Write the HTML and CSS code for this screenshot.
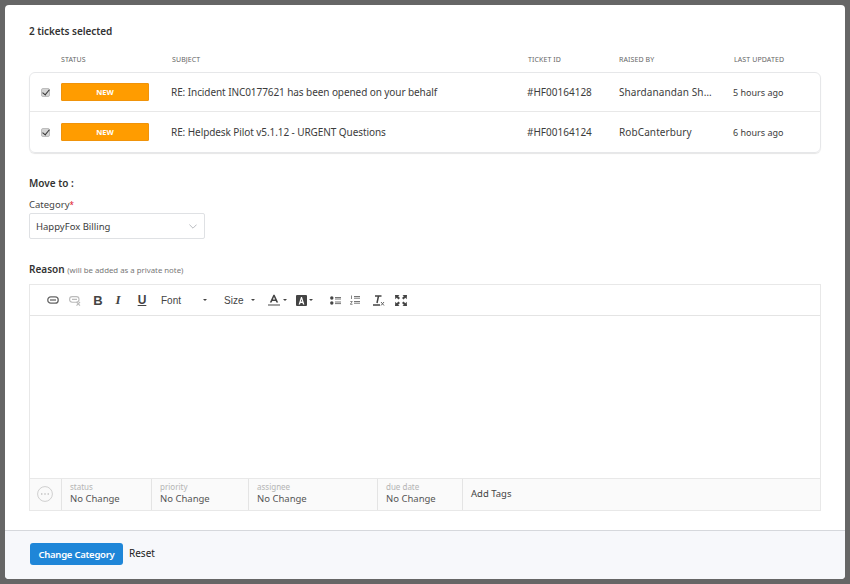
FILE: index.html
```html
<!DOCTYPE html>
<html lang="en">
<head>
<meta charset="utf-8">
<title>Move tickets</title>
<link rel="stylesheet" href="styles.css">
</head>
<body>
<div class="modal">
  <main class="content">
    <h1 class="selected">2 tickets selected</h1>
    <div class="grid heads">
      <span></span><span class="h-status">STATUS</span><span>SUBJECT</span><span>TICKET ID</span><span>RAISED BY</span><span>LAST UPDATED</span>
    </div>
    <div class="card">
      <div class="grid row">
        <input class="check" type="checkbox" checked>
        <span class="badge">NEW</span>
        <span class="subject">RE: Incident INC0177621 has been opened on your behalf</span>
        <span class="tid">#HF00164128</span>
        <span class="raised">Shardanandan Sh…</span>
        <span class="updated">5 hours ago</span>
      </div>
      <div class="grid row">
        <input class="check" type="checkbox" checked>
        <span class="badge">NEW</span>
        <span class="subject">RE: Helpdesk Pilot v5.1.12 - URGENT Questions</span>
        <span class="tid">#HF00164124</span>
        <span class="raised">RobCanterbury</span>
        <span class="updated">6 hours ago</span>
      </div>
    </div>
    <h2 class="move">Move to :</h2>
    <label class="cat-label">Category<span class="req">*</span></label>
    <div class="select">
      <span>HappyFox Billing</span>
      <svg class="chev" width="8" height="5" viewBox="0 0 8 5"><path d="M.4.6 4 4.200 7.600.6" fill="none" stroke="#b9bcc0" stroke-width="1"/></svg>
    </div>
    <div class="reason"><strong>Reason</strong> <small>(will be added as a private note)</small></div>
    <div class="editor">
      <div class="toolbar">
        <svg class="ic ic-link" width="12" height="8" viewBox="0 0 12 8"><rect x=".8" y=".8" width="10.400" height="6.400" rx="3" fill="none" stroke="#666" stroke-width="1.300"/><path d="M3 4h6" stroke="#666" stroke-width="1.300"/></svg>
        <svg class="ic ic-unlink" width="12" height="10" viewBox="0 0 12 10"><rect x=".6" y=".6" width="9.400" height="5.600" rx="2.600" fill="none" stroke="#bbb" stroke-width="1.100"/><path d="M3 3.400h5M7.500 6l3.500 3.600M11 6 7.500 9.600" stroke="#bbb" stroke-width="1.100"/></svg>
        <span class="tb tb-b">B</span>
        <span class="tb tb-i">I</span>
        <span class="tb tb-u">U</span>
        <span class="combo combo-font">Font</span><i class="caret caret-font"></i>
        <span class="combo combo-size">Size</span><i class="caret caret-size"></i>
        <svg class="ic ic-color" width="13" height="12" viewBox="0 0 13 12"><path d="M1.800 8.600 5.400.8h1.200l3.600 7.800H8.400L7.700 7H4.300l-.7 1.600ZM4.900 5.500h2.200L6 3Z" fill="#444"/><path d="M0 11h12" stroke="#666" stroke-width="1.200"/></svg><i class="caret caret-mini"></i>
        <svg class="ic ic-bg" width="11" height="11" viewBox="0 0 11 11"><rect width="11" height="11" rx="1" fill="#444"/><path d="M2.600 9.400 5 2h1l2.400 7.400H7L6.500 8h-2L4 9.400ZM4.800 6.600h1.400L5.500 4.200Z" fill="#fff"/></svg><i class="caret caret-mini"></i>
        <svg class="ic ic-ul" width="11" height="9" viewBox="0 0 11 9"><circle cx="1.800" cy="2" r="1.700" fill="#444"/><circle cx="1.800" cy="7" r="1.700" fill="#444"/><path d="M5 1.500h6M5 3h6M5 6h6M5 7.600h6" stroke="#666" stroke-width=".9"/></svg>
        <svg class="ic ic-ol" width="10" height="10" viewBox="0 0 10 10"><path d="M1.500.5v3.500M.3 6.500h2L.3 9.300h2.200" stroke="#666" stroke-width=".8" fill="none"/><path d="M4 1.500h6M4 3.200h6M4 6.500h6M4 8.200h6" stroke="#666" stroke-width=".9"/></svg>
        <svg class="ic ic-clear" width="12" height="11" viewBox="0 0 12 11"><path d="M2 1h6.500M5.500 1 4 8M0 10h7" stroke="#444" stroke-width="1.500" fill="none"/><path d="M8 7l3 3.500M11 7l-3 3.500" stroke="#666" stroke-width="1"/></svg>
        <svg class="ic ic-max" width="12" height="11" viewBox="0 0 12 11"><path d="M0 0h4.500L3.200 1.300l1.800 1.800-1.500 1.500-1.800-1.800L.3 4.200ZM12 0H7.500l1.300 1.300L7 3.100l1.500 1.500 1.800-1.800 1.400 1.400ZM0 11h4.500L3.200 9.700 5 7.900 3.500 6.400 1.700 8.200.3 6.800ZM12 11H7.500l1.300-1.300L7 7.900l1.500-1.500 1.800 1.800 1.400-1.400Z" fill="#444"/></svg>
      </div>
      <div class="edit-area"></div>
      <div class="props">
        <div class="cell cell-more">
          <svg width="16" height="16" viewBox="0 0 16 16"><circle cx="8" cy="8" r="7.400" fill="none" stroke="#c9c9c9" stroke-width=".9"/><circle cx="4.800" cy="8" r=".7" fill="#aaa"/><circle cx="8" cy="8" r=".7" fill="#aaa"/><circle cx="11.200" cy="8" r=".7" fill="#aaa"/></svg>
        </div>
        <div class="cell cell-status"><span class="k">status</span><span class="v">No Change</span></div>
        <div class="cell cell-priority"><span class="k">priority</span><span class="v">No Change</span></div>
        <div class="cell cell-assignee"><span class="k">assignee</span><span class="v">No Change</span></div>
        <div class="cell cell-due"><span class="k">due date</span><span class="v">No Change</span></div>
        <div class="cell cell-tags">Add Tags</div>
      </div>
    </div>
  </main>
  <footer class="footer">
    <button class="primary" type="button">Change Category</button>
    <a class="reset">Reset</a>
  </footer>
</div>
</body>
</html>
```
FILE: styles.css
```css
* { box-sizing: border-box; }
html, body { height: 100%; }
body {
  margin: 0;
  padding: 5px;
  background: #666;
  font-family: "Noto Sans", "Open Sans", sans-serif;
  color: #333;
  overflow: hidden;
}
.modal {
  height: 574px;
  width: 840px;
  background: #fff;
  border-radius: 4px;
  display: flex;
  flex-direction: column;
  overflow: hidden;
}
.content { flex: 1; padding: 0 24px; }
.selected {
  margin: 19px 0 0;
  font-size: 10px;
  line-height: 14px;
  font-weight: 600;
  letter-spacing: -.05px;
  color: #333;
}
.grid {
  display: grid;
  grid-template-columns: 31px 110px 356px 91px 115px 1fr;
  align-items: center;
}
.heads {
  height: 14px;
  margin-top: 15px;
  padding-left: 1px;
  font-size: 7px;
  line-height: 14px;
  color: #666;
  letter-spacing: .1px;
}
.heads span { padding-left: 1px; }
.heads .h-status { padding-left: 0; }
.card {
  margin-top: 5px;
  height: 81px;
  width: 792px;
  border: 1px solid #e6e7e9;
  border-radius: 6px;
  box-shadow: 0 1px 1px #e6e6e6;
}
.row { height: 38px; font-size: 10px; color: #3c3c3c; }
.row + .row { border-top: 1px solid #e8e8e8; height: 41px; }
.subject { letter-spacing: -.08px; }
.raised { padding-left: 1px; letter-spacing: .1px; white-space: nowrap; }
.updated { font-size: 9px; }
.check {
  appearance: none;
  position: relative;
  margin: 0 0 0 11px;
  width: 9px;
  height: 9px;
  background: #d4d4d4;
  border: 1px solid #bdbdbd;
  border-radius: 2px;
}
.check::after {
  content: "";
  position: absolute;
  left: 2px;
  top: -1px;
  width: 3px;
  height: 6px;
  border: solid #333;
  border-width: 0 1.500px 1.500px 0;
  transform: rotate(40deg);
}
.badge {
  width: 88px;
  height: 18px;
  background: #ff9c00;
  border: 1px solid #f0930a;
  border-radius: 1px;
  color: #fff;
  font-size: 7.500px;
  font-weight: 700;
  line-height: 16px;
  text-align: center;
}
.move {
  margin: 23px 0 0;
  font-size: 10px;
  line-height: 14px;
  font-weight: 600;
  color: #333;
}
.cat-label {
  display: block;
  margin-top: 8px;
  font-size: 9.500px;
  line-height: 14px;
  color: #444;
}
.req { color: #e0132a; font-size: 8px; }
.select {
  margin-top: 1px;
  width: 176px;
  height: 26px;
  border: 1px solid #dfe1e4;
  border-radius: 2px;
  padding: 0 7px 0 6px;
  display: flex;
  align-items: center;
  justify-content: space-between;
  font-size: 9.500px;
  color: #3c3c3c;
}
.reason {
  margin-top: 23px;
  height: 14px;
  line-height: 14px;
  font-size: 10px;
  color: #333;
}
.reason strong { font-weight: 600; }
.reason small { font-size: 7.800px; color: #777; }
.editor {
  margin-top: 8px;
  width: 792px;
  height: 227px;
  border: 1px solid #e8e8e8;
  display: flex;
  flex-direction: column;
}
.toolbar {
  height: 31px;
  flex: none;
  border-bottom: 1px solid #e4e4e4;
  padding-left: 17px;
  display: flex;
  align-items: center;
  color: #444;
}
.ic { flex: none; display: block; }
.tb { display: block; width: 12px; text-align: center; font-family: "Liberation Serif", serif; font-size: 13px; color: #444; }
.tb-b { font-family: "Liberation Sans", sans-serif; font-weight: 700; margin-left: 11px; }
.tb-i { font-style: italic; font-weight: 700; margin-left: 8px; }
.tb-u { font-family: "Liberation Sans", sans-serif; font-weight: 700; text-decoration: underline; margin-left: 12px; font-size: 12px; }
.ic-unlink { margin-left: 10px; margin-top: 2px; }
.combo { font-family: "Liberation Sans", sans-serif; font-size: 10px; color: #444; }
.combo-font { margin-left: 13px; }
.combo-size { margin-left: 17px; }
.caret {
  display: block;
  width: 0;
  height: 0;
  border: 2px solid transparent;
  border-top-color: #444;
  border-bottom: 0;
  flex: none;
}
.caret-font { margin-left: 22px; }
.caret-size { margin-left: 8px; }
.caret-mini { margin-left: 2px; }
.ic-color { margin-left: 13px; }
.ic-bg { margin-left: 9px; }
.ic-ul { margin-left: 17px; }
.ic-ol { margin-left: 9px; }
.ic-clear { margin-left: 13px; }
.ic-max { margin-left: 10px; }
.edit-area { flex: 1; }
.props {
  height: 32px;
  flex: none;
  border-top: 1px solid #e8e8e8;
  background: #fafafa;
  display: flex;
}
.cell {
  border-right: 1px solid #e4e4e4;
  padding: 0 0 3px 8px;
  display: flex;
  flex-direction: column;
  justify-content: center;
  flex: none;
}
.cell-more { width: 32px; padding: 0 0 1px 7px; }
.cell-status { width: 90px; }
.cell-priority { width: 97px; }
.cell-assignee { width: 129px; }
.cell-due { width: 85px; }
.cell-tags { flex: 1; border-right: 0; font-size: 9.500px; color: #444; }
.k { font-size: 8px; line-height: 11px; color: #b4b4b4; }
.v { font-size: 9.500px; line-height: 13px; color: #555; }
.footer {
  height: 49px;
  flex: none;
  border-top: 1px solid #d6d8dc;
  background: #f7f8fb;
  padding: 0 0 2px 25px;
  display: flex;
  align-items: center;
}
.primary {
  width: 93px;
  height: 22px;
  border: 0;
  border-radius: 3px;
  background: #1f86d8;
  color: #fff;
  font-family: inherit;
  font-size: 9.500px;
  font-weight: 600;
  letter-spacing: -.25px;
  padding: 0;
}
.reset { margin-left: 6px; font-size: 10px; color: #222; margin-top: -2px; }
```
